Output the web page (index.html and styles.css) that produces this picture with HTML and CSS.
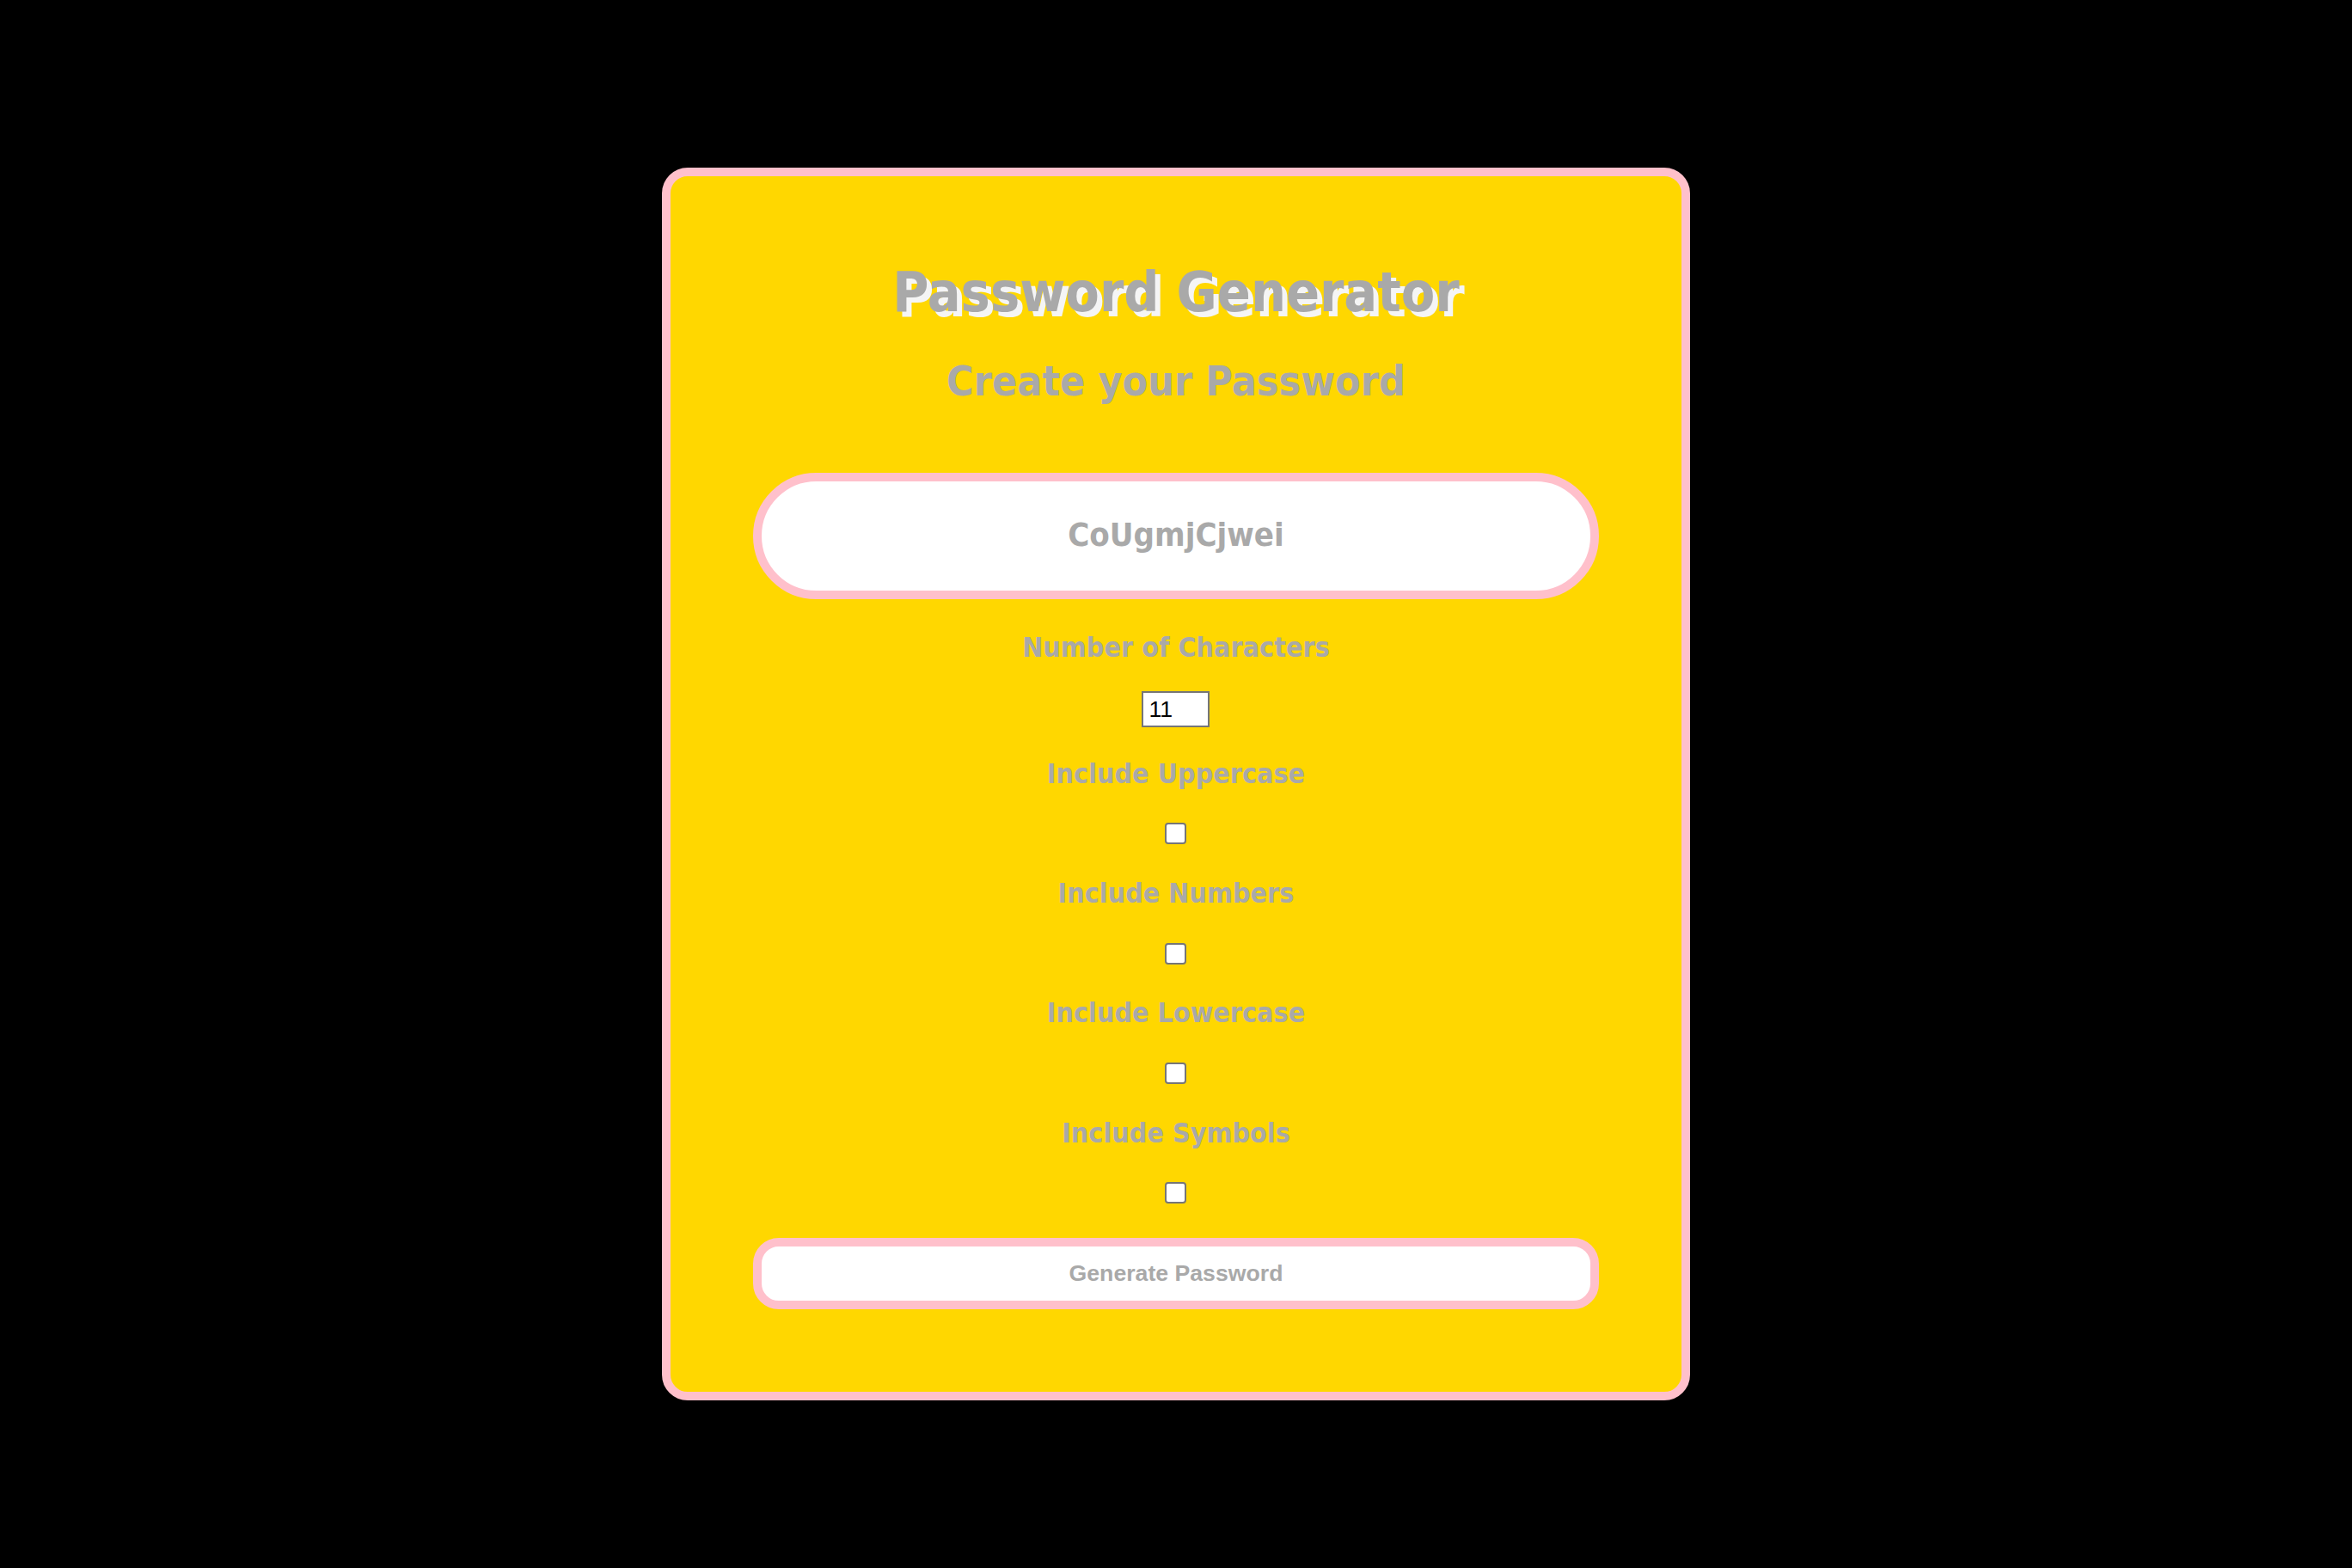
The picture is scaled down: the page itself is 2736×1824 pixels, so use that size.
FILE: index.html
```html
<!DOCTYPE html>
<html lang="en">
<head>
<meta charset="utf-8">
<title>Password Generator</title>
<link rel="stylesheet" href="styles.css">
</head>
<body>
<main class="card">
  <h1 class="title">Password Generator</h1>
  <h2 class="subtitle">Create your Password</h2>
  <div class="result">CoUgmjCjwei</div>
  <div class="field field-length">
    <label class="field-label" for="length">Number of Characters</label>
    <input class="num" id="length" type="number" value="11">
  </div>
  <div class="field field-option field-first-option">
    <label class="field-label" for="upper">Include Uppercase</label>
    <input class="check" type="checkbox" id="upper">
  </div>
  <div class="field field-option">
    <label class="field-label" for="numbers">Include Numbers</label>
    <input class="check" type="checkbox" id="numbers">
  </div>
  <div class="field field-option">
    <label class="field-label" for="lower">Include Lowercase</label>
    <input class="check" type="checkbox" id="lower">
  </div>
  <div class="field field-option">
    <label class="field-label" for="symbols">Include Symbols</label>
    <input class="check" type="checkbox" id="symbols">
  </div>
  <button class="generate" type="button">Generate Password</button>
</main>
</body>
</html>
```

FILE: styles.css
```css
html, body {
  margin: 0;
  padding: 0;
}

body {
  background: #000;
  min-height: 100vh;
  display: flex;
  align-items: center;
  justify-content: center;
  font-family: "DejaVu Sans Condensed", "DejaVu Sans", sans-serif;
  font-stretch: condensed;
  color: #a9a9a9;
}

.card {
  box-sizing: border-box;
  width: 1196px;
  padding: 96px;
  background: #ffd700;
  border: 10px solid #ffc0cb;
  border-radius: 30px;
  display: flex;
  flex-direction: column;
  align-items: center;
}

.title {
  margin: 2px 0 0;
  font-size: 64px;
  line-height: 74px;
  font-weight: bold;
  text-shadow: 6px 6px 0 #f5f5f5;
}

.subtitle {
  margin: 38px 0 0;
  font-size: 48px;
  line-height: 56px;
  font-weight: bold;
}

.result {
  box-sizing: border-box;
  margin-top: 78.5px;
  width: 100%;
  height: 147px;
  background: #fff;
  border: 10px solid #ffc0cb;
  border-radius: 80px;
  display: flex;
  align-items: center;
  justify-content: center;
  font-size: 38px;
  font-weight: bold;
  padding-bottom: 2px;
}

.field {
  display: flex;
  flex-direction: column;
  align-items: center;
}

.field-length {
  margin-top: 38.5px;
}

.field-option {
  margin-top: 38.8px;
}

.field-first-option {
  margin-top: 35.3px;
}

.field-label {
  font-size: 32px;
  line-height: 37px;
  font-weight: bold;
}

.num {
  box-sizing: border-box;
  margin: 32px 0 0;
  width: 79px;
  height: 42px;
  padding: 1px 4px 1px 6px;
  border: 2px solid #767676;
  border-radius: 0;
  background: #fff;
  color: #000;
  font-family: "Liberation Sans", Arial, sans-serif;
  font-stretch: normal;
  font-size: 26.67px;
  -moz-appearance: textfield;
  appearance: textfield;
}

.num::-webkit-outer-spin-button,
.num::-webkit-inner-spin-button {
  -webkit-appearance: none;
  margin: 0;
}

.check {
  -webkit-appearance: none;
  appearance: none;
  box-sizing: border-box;
  margin: 38.5px 0 0;
  width: 25px;
  height: 25px;
  border: 2px solid #767676;
  border-radius: 4px;
  background: #fff;
}

.generate {
  box-sizing: border-box;
  margin-top: 39.5px;
  width: 100%;
  height: 83px;
  background: #fff;
  border: 10px solid #ffc0cb;
  border-radius: 30px;
  color: #a9a9a9;
  font-family: "Liberation Sans", Arial, sans-serif;
  font-stretch: normal;
  font-size: 26.67px;
  font-weight: bold;
  padding: 0;
}
```
